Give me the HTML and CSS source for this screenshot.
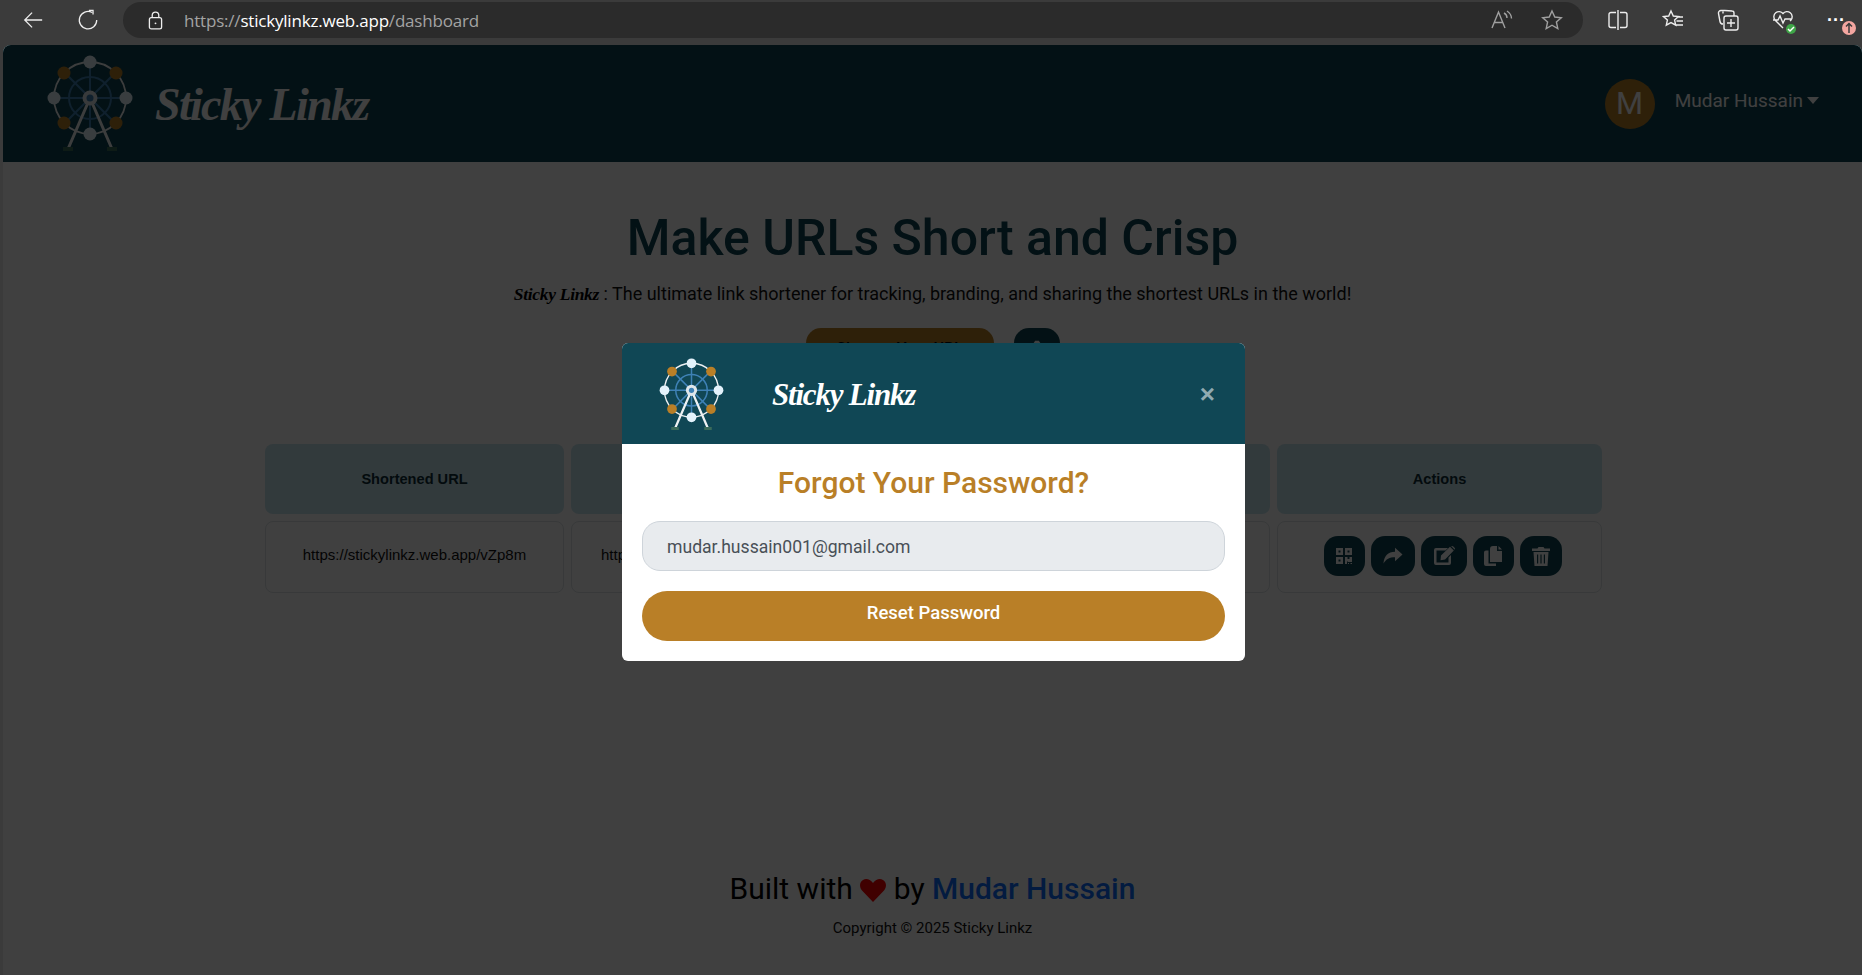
FILE: index.html
```html
<!DOCTYPE html>
<html lang="en">
<head>
<meta charset="utf-8">
<title>Sticky Linkz</title>
<link rel="stylesheet" href="styles.css">
</head>
<body>
<svg class="defs" width="0" height="0" aria-hidden="true">
  <symbol id="wheel" viewBox="0 0 86 100">
    <g class="w-blue">
      <circle cx="43" cy="43" r="21"/>
      <path d="M43 7V79M7 43H79M17.500 17.500L68.500 68.500M68.500 17.500L17.500 68.500"/>
    </g>
    <circle class="w-rim" cx="43" cy="43" r="36"/>
    <path class="w-leg" d="M43 43L21 94M43 43L65 94"/>
    <circle class="w-hub" cx="43" cy="43" r="7.500"/>
    <circle class="w-core" cx="43" cy="43" r="3.500"/>
    <circle class="w-light" cx="43" cy="7" r="6.500"/>
    <circle class="w-light" cx="43" cy="79" r="6.500"/>
    <circle class="w-light" cx="7" cy="43" r="6.500"/>
    <circle class="w-light" cx="79" cy="43" r="6.500"/>
    <circle class="w-gold" cx="17" cy="18" r="6.500"/>
    <circle class="w-gold" cx="69" cy="18" r="6.500"/>
    <circle class="w-gold" cx="17" cy="68" r="6.500"/>
    <circle class="w-gold" cx="69" cy="68" r="6.500"/>
    <rect class="w-foot" x="16" y="92" width="10" height="4"/>
    <rect class="w-foot" x="60" y="92" width="10" height="4"/>
  </symbol>
</svg>

<header class="toolbar">
  <svg class="tb-icon back" viewBox="0 0 24 24"><path d="M22 12H3M11 4l-8 8 8 8"/></svg>
  <svg class="tb-icon reload" viewBox="0 0 24 24"><path d="M16.500 3.800A9.500 9.500 0 1 0 21.500 12M13 1.500h4.500V6"/></svg>
  <div class="address">
    <svg class="tb-icon lock" viewBox="0 0 16 20"><rect x="1.500" y="7" width="13" height="12" rx="2"/><path d="M4.500 7V4.500a3.500 3.500 0 0 1 7 0V7"/><circle class="dot" cx="8" cy="13" r="1"/></svg>
    <span class="url"><span class="url-dim">https://</span>stickylinkz.web.app<span class="url-dim">/dashboard</span></span>
    <svg class="tb-icon dim read" viewBox="0 0 22 20"><path d="M1 18L7.500 2 14 18M3.500 12.500h8M13 3c2 1 3 3 3 5M16 1c3 2 4.500 4.500 4.500 7.500"/></svg>
    <svg class="tb-icon dim star" viewBox="0 0 22 22"><path d="M11 2l2.800 6 6.500.7-4.900 4.300 1.400 6.500L11 16.200 5.200 19.500l1.400-6.500L1.700 8.700 8.200 8z"/></svg>
  </div>
  <div class="tb-actions">
    <svg class="tb-icon" viewBox="0 0 22 22"><path d="M11 1v20M9 3.500H4a2 2 0 0 0-2 2v11a2 2 0 0 0 2 2h5M13 3.500h5a2 2 0 0 1 2 2v11a2 2 0 0 1-2 2h-5"/></svg>
    <svg class="tb-icon" viewBox="0 0 22 22"><path d="M9 2l2.300 5 5.200.6-3.900 3.500 1.100 5.100L9 13.600 4.300 16.200l1.100-5.100L1.500 7.600 6.700 7zM15 8h6M14.500 12h6.500M13.500 16H21"/></svg>
    <svg class="tb-icon" viewBox="0 0 22 22"><path d="M8 1.500H4a2.500 2.500 0 0 0-2.500 3l1.500 8a3 3 0 0 0 3 2.500M6 4.500V2.500M8 1.500l7 .5a2 2 0 0 1 2 2v3M9 7h10a2 2 0 0 1 2 2v10a2 2 0 0 1-2 2H9a2 2 0 0 1-2-2V9a2 2 0 0 1 2-2zM14 10v8M10 14h8"/></svg>
    <span class="health">
      <svg class="tb-icon" viewBox="0 0 22 22"><path d="M11 19L3 11a5 5 0 0 1 8-6.500A5 5 0 0 1 19 11l-1 1M1 11h5l2-4 3 7 2-4h6"/></svg>
      <span class="health-dot"><svg viewBox="0 0 10 10"><path d="M2 5l2 2 4-4"/></svg></span>
    </span>
    <span class="more">
      <span class="more-dots">···</span>
      <span class="update-dot"><svg viewBox="0 0 14 14"><path d="M7 12V3M4 5.500L7 2.500 10 5.500"/></svg></span>
    </span>
  </div>
</header>

<div class="page">
  <nav class="nav">
    <svg class="nav-logo"><use href="#wheel"/></svg>
    <span class="brand nav-brand">Sticky Linkz</span>
    <div class="user">
      <span class="avatar">M</span>
      <span class="user-name">Mudar Hussain</span>
      <span class="caret"></span>
    </div>
  </nav>

  <main class="main">
    <h1 class="title">Make URLs Short and Crisp</h1>
    <p class="lead"><span class="brand lead-brand">Sticky Linkz</span> : The ultimate link shortener for tracking, branding, and sharing the shortest URLs in the world!</p>
    <div class="cta">
      <button class="btn-shorten">Shorten Your URL</button>
      <button class="btn-camera"><svg viewBox="0 0 24 24"><path d="M4 7h4l2-3h4l2 3h4v12H4z"/></svg></button>
    </div>
    <div class="grid">
      <div class="th">Shortened URL</div>
      <div class="th"></div>
      <div class="th"></div>
      <div class="th">Actions</div>
      <div class="td">https://stickylinkz.web.app/vZp8m</div>
      <div class="td td-long">https://</div>
      <div class="td"></div>
      <div class="td td-actions">
        <button class="act act-a"><svg viewBox="0 0 18 18"><path d="M1 1h7v7H1zM10 1h7v7h-7zM1 10h7v7H1zM3.500 3.500v2h2v-2zM12.500 3.500v2h2v-2zM3.500 12.500v2h2v-2zM10 10h2.500v2h2v-2H17v5h-4.500v-1H12v3h-2zM13 16h1v1h-1zM15.500 16h1.500v1h-1.500z" fill-rule="evenodd"/></svg></button>
        <button class="act act-b"><svg viewBox="0 0 20 18"><path d="M19.500 7.500L12 .8v4C5 5 1 9 .5 16.500 3 12 6.500 10.200 12 10.200v4z"/></svg></button>
        <button class="act act-c"><svg viewBox="0 0 22 20"><path d="M15 2H3a2 2 0 0 0-2 2v13a2 2 0 0 0 2 2h13a2 2 0 0 0 2-2V9l-2.500 2.500V16.500H3.500V4.500H12.500z"/><path d="M8 9.500L17 .8 20.800 4.500 12 13.500 7.500 14.300zM18 0l3.700 3.700 .3-1.500L20 .2z"/></svg></button>
        <button class="act act-d"><svg viewBox="0 0 18 20"><path d="M9 0h4v5h5v11H6V3a3 3 0 0 1 3-3zM14.500 0L18 3.500h-3.500z"/><path d="M4.500 4.500V17.500H12V20H2a2 2 0 0 1-2-2V6.500a2 2 0 0 1 2-2z"/></svg></button>
        <button class="act act-e"><svg viewBox="0 0 18 20"><path d="M0 2.500h5.500L6.500 1h5l1 1.500H18V5H0zM1.500 6h15l-1 14h-13zM5 8.500v9h1.200v-9zM8.400 8.500v9h1.200v-9zM11.800 8.500v9H13v-9z" fill-rule="evenodd"/></svg></button>
      </div>
    </div>
  </main>

  <footer class="footer">
    <p class="built">Built with <svg class="heart" viewBox="0 0 26 23"><path d="M13 23L2 11.500C-1 8 -.5 3 3 1c3-1.800 7-1 10 3 3-4 7-4.800 10-3 3.500 2 4 7 1 10.500z"/></svg> by <a class="author" href="#">Mudar Hussain</a></p>
    <p class="copy">Copyright © 2025 Sticky Linkz</p>
  </footer>

  <div class="overlay">
    <section class="modal">
      <div class="modal-head">
        <svg class="modal-logo"><use href="#wheel"/></svg>
        <span class="brand modal-brand">Sticky Linkz</span>
        <span class="close">×</span>
      </div>
      <div class="modal-body">
        <h2 class="modal-title">Forgot Your Password?</h2>
        <input class="field" type="email" value="mudar.hussain001@gmail.com">
        <button class="reset">Reset Password</button>
      </div>
    </section>
  </div>
</div>
</body>
</html>
```

FILE: styles.css
```css
* { box-sizing: border-box; }
html, body { height: 100%; }
body {
  margin: 0;
  background: #3b3b3b;
  font-family: Roboto, "Liberation Sans", sans-serif;
  display: flex;
  flex-direction: column;
  overflow: hidden;
}
.defs { position: absolute; }

/* browser chrome */
.toolbar {
  height: 45px;
  flex: none;
  display: flex;
  align-items: flex-start;
  padding: 2px 0 0 22px;
}
.tb-icon {
  width: 22px;
  height: 22px;
  fill: none;
  stroke: #ededed;
  stroke-width: 1.400;
  flex: none;
}
.tb-icon.dim { stroke: #a0a0a0; }
.back { margin: 7px 33px 0 0; }
.reload { margin: 7px 24px 0 0; }
.address {
  width: 1460px;
  height: 36px;
  background: #2b2b2b;
  border-radius: 18px;
  display: flex;
  align-items: center;
  padding: 0 20px 0 25px;
  flex: none;
}
.lock { width: 15px; height: 19px; }
.dot { fill: #ededed; stroke: none; }
.url {
  margin-left: 21px;
  font: 17px "Open Sans", sans-serif;
  letter-spacing: -.2px;
  color: #fff;
  flex: 1;
}
.url-dim { color: #a3a3a3; }
.read { margin-right: 28px; }
.tb-actions {
  display: flex;
  align-items: center;
  gap: 33px;
  height: 36px;
  margin-left: 24px;
}
.health, .more { position: relative; display: flex; }
.health-dot {
  position: absolute;
  right: -2px;
  bottom: -3px;
  width: 10px;
  height: 10px;
  border-radius: 50%;
  background: #3fa648;
}
.health-dot svg, .update-dot svg { display: block; fill: none; stroke: #fff; stroke-width: 1.500; }
.more-dots { color: #fff; font: bold 18px/22px "Liberation Sans", sans-serif; width: 22px; letter-spacing: 0; }
.update-dot {
  position: absolute;
  left: 15px;
  top: 12px;
  width: 14px;
  height: 14px;
  border-radius: 50%;
  background: #f4a6a0;
}
.update-dot svg { stroke: #3b3b3b; }

/* page */
.page {
  position: relative;
  flex: 1;
  margin-left: 3px;
  background: #fff;
  border-radius: 8px 8px 0 0;
  overflow: hidden;
  display: flex;
  flex-direction: column;
}
.brand {
  font-family: "Liberation Serif", serif;
  font-weight: 700;
  font-style: italic;
}
.nav {
  height: 117px;
  flex: none;
  background: #0f4654;
  display: flex;
  align-items: center;
  padding: 0 43px 0 44px;
}
.nav-logo { width: 86px; height: 100px; margin-top: 2px; flex: none; }
.nav-brand { color: #fff; font-size: 46px; letter-spacing: -1.700px; margin: 2px 0 0 22px; }
.user { margin-left: auto; display: flex; align-items: center; }
.avatar {
  width: 50px;
  height: 50px;
  border-radius: 50%;
  background: #b97f27;
  color: #fff;
  font-size: 31px;
  text-align: center;
  line-height: 50px;
}
.user-name { color: #fff; font-size: 19px; margin: -7px 0 0 20px; }
.caret {
  margin: -6px 0 0 4px;
  border: 6.500px solid transparent;
  border-top: 7px solid #fff;
  border-bottom: 0;
}

.main { flex: 1; display: flex; flex-direction: column; align-items: center; }
.title {
  margin: 47px 0 0;
  font-size: 50px;
  line-height: 58px;
  font-weight: 500;
  color: #0f4654;
}
.lead { margin: 13px 0 0; font-size: 18px; line-height: 27px; color: #111; }
.lead-brand { font-size: 17.500px; color: #000; letter-spacing: -.3px; }
.cta { display: flex; gap: 20px; margin-top: 20px; height: 116px; }
.btn-shorten {
  width: 188px;
  height: 40px;
  background: #b97f27;
  border: 0;
  border-radius: 15px;
  color: #000;
  font: 500 16px Roboto, sans-serif;
}
.btn-camera {
  width: 46px;
  height: 40px;
  background: #0f4654;
  border: 0;
  border-radius: 15px;
  padding: 8px 12px;
}
.btn-camera svg { display: block; fill: #fff; }

.grid {
  width: 1337px;
  display: grid;
  grid-template-columns: 299px 1fr 1fr 325px;
  grid-template-rows: 70px 72px;
  gap: 7px;
  margin-left: 2px;
  font-family: "Liberation Sans", sans-serif;
  font-size: 15px;
}
.th {
  background: #c8e6ee;
  border-radius: 8px;
  font-size: 14.600px;
  font-weight: 700;
  color: #0f2f38;
  display: flex;
  align-items: center;
  justify-content: center;
}
.td {
  border: 1px solid #dde4e6;
  border-radius: 8px;
  color: #111;
  display: flex;
  align-items: center;
  justify-content: center;
  padding-bottom: 5px;
}
.td-long { justify-content: flex-start; padding-left: 29px; overflow: hidden; white-space: nowrap; }
.td-actions { gap: 6px; padding: 0 0 2px 6px; }
.act {
  height: 40px;
  border: 0;
  border-radius: 14px;
  background: #0f4654;
  padding: 0;
  display: flex;
  align-items: center;
  justify-content: center;
}
.act svg { fill: #fff; height: 18px; }
.act-a { width: 41px; }
.act-b { width: 44px; }
.act-c { width: 46px; }
.act-d { width: 41px; }
.act-e { width: 42px; }
.act-a svg { width: 18px; }
.act-b svg { width: 20px; }
.act-c svg { width: 22px; height: 20px; }
.act-d svg { width: 18px; height: 20px; }
.act-e svg { width: 18px; height: 20px; }

.footer { flex: none; height: 103px; text-align: center; }
.built { margin: 0; font-size: 30px; line-height: 34px; font-weight: 400; color: #000; }
.heart { width: 26px; height: 23px; fill: #ff0000; vertical-align: -3px; }
.author { color: #0d6efd; text-decoration: none; font-weight: 500; }
.copy { margin: 12px 0 0; font-size: 15px; line-height: 21px; color: #111; }

/* modal */
.overlay {
  position: absolute;
  inset: 0;
  background: rgba(0, 0, 0, .75);
  display: flex;
  justify-content: center;
  align-items: flex-start;
  padding: 298px 0 0 2px;
}
.modal {
  width: 623px;
  background: #fff;
  border-radius: 6px;
  overflow: hidden;
}
.modal-head {
  height: 101px;
  background: #104755;
  display: flex;
  align-items: center;
  padding: 0 30px 0 37px;
}
.modal-logo { width: 65px; height: 75px; flex: none; margin-top: 4px; }
.modal-brand { color: #fff; font-size: 31px; letter-spacing: -1.200px; margin: 3px 0 0 48px; }
.close {
  margin-left: auto;
  color: #90aab1;
  font: bold 26px/26px "Liberation Sans", sans-serif;
}
.modal-body { padding: 19px 20px 20px; display: flex; flex-direction: column; align-items: center; }
.modal-title { margin: 0; font-size: 30px; line-height: 40px; font-weight: 500; color: #b97f27; }
.field {
  width: 100%;
  height: 50px;
  margin-top: 18px;
  background: #e8ebee;
  border: 1px solid #ced4da;
  border-radius: 18px;
  padding: 1px 24px 0;
  font: 17.600px Roboto, sans-serif;
  color: #495057;
}
.reset {
  width: 100%;
  height: 50px;
  margin-top: 20px;
  padding-bottom: 7px;
  background: #b97f27;
  border: 0;
  border-radius: 25px;
  color: #fff;
  font: 500 18.500px Roboto, sans-serif;
}

/* ferris wheel */
.w-blue { fill: none; stroke: #3e81b5; stroke-width: 2; }
.w-rim { fill: none; stroke: #eef1f3; stroke-width: 1.800; }
.w-leg { fill: none; stroke: #eef1f3; stroke-width: 3; }
.w-hub { fill: #dfe6ea; }
.w-core { fill: #3e81b5; }
.w-light { fill: #e3f2fb; }
.w-gold { fill: #b97f27; }
.w-foot { fill: #3a6b5a; }
```
